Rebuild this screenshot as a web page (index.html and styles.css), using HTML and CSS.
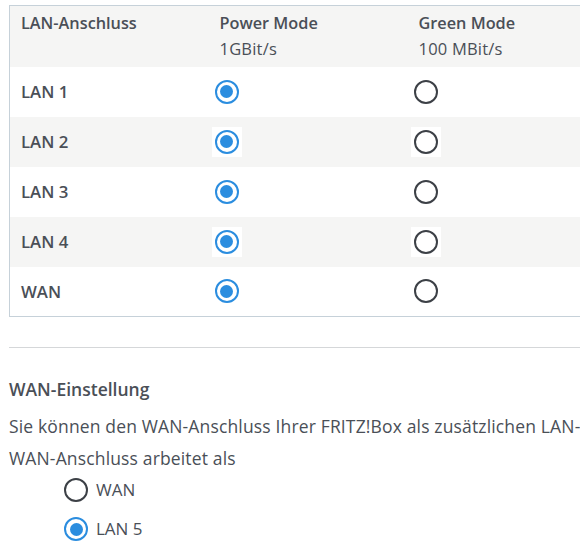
FILE: index.html
```html
<!DOCTYPE html>
<html lang="de">
<head>
<meta charset="utf-8">
<title>LAN-Einstellungen</title>
<link rel="stylesheet" href="styles.css">
</head>
<body>
<div class="page">
  <table class="ports">
    <thead>
      <tr>
        <th>LAN-Anschluss</th>
        <th>Power Mode<span class="sub">1GBit/s</span></th>
        <th>Green Mode<span class="sub">100 MBit/s</span></th>
      </tr>
    </thead>
    <tbody>
      <tr><td class="name">LAN 1</td><td><span class="rbox"><span class="radio on"></span></span></td><td><span class="rbox"><span class="radio"></span></span></td></tr>
      <tr><td class="name">LAN 2</td><td><span class="rbox"><span class="radio on"></span></span></td><td><span class="rbox"><span class="radio"></span></span></td></tr>
      <tr><td class="name">LAN 3</td><td><span class="rbox"><span class="radio on"></span></span></td><td><span class="rbox"><span class="radio"></span></span></td></tr>
      <tr><td class="name">LAN 4</td><td><span class="rbox"><span class="radio on"></span></span></td><td><span class="rbox"><span class="radio"></span></span></td></tr>
      <tr><td class="name">WAN</td><td><span class="rbox"><span class="radio on"></span></span></td><td><span class="rbox"><span class="radio"></span></span></td></tr>
    </tbody>
  </table>

  <hr class="sep">

  <h2 class="title">WAN-Einstellung</h2>
  <p class="text">Sie können den WAN-Anschluss Ihrer FRITZ!Box als zusätzlichen LAN-</p>
  <p class="text">WAN-Anschluss arbeitet als</p>
  <div class="options">
    <label class="opt"><span class="radio"></span>WAN</label>
    <label class="opt"><span class="radio on"></span>LAN 5</label>
  </div>
</div>
</body>
</html>
```

FILE: styles.css
```css
html, body {
  margin: 0;
  padding: 0;
  background: #ffffff;
  overflow: hidden;
}

body {
  font-family: "Open Sans", "Noto Sans", sans-serif;
  color: #4a4f57;
  font-size: 16px;
}

.page {
  padding: 5px 0 0 9px;
  width: 640px;
}

.ports {
  border-collapse: collapse;
  border: 1px solid #c6d1d9;
  width: 620px;
  table-layout: fixed;
}

.ports th,
.ports td {
  width: 199px;
  text-align: left;
  padding: 0 0 0 11px;
  box-sizing: border-box;
}

.ports th:last-child,
.ports td:last-child {
  width: auto;
}

.ports thead tr {
  background: #f5f5f4;
  height: 61px;
}

.ports th {
  vertical-align: top;
  padding-top: 6px;
  font-weight: 600;
  font-size: 16.3px;
  line-height: 22px;
}

.ports .sub {
  display: block;
  font-weight: 400;
  font-size: 16.5px;
  letter-spacing: 0.2px;
  line-height: 29px;
}

.ports tbody tr {
  height: 50px;
}

.ports tbody tr:nth-child(even) {
  background: #f5f5f4;
}

.ports td {
  vertical-align: middle;
  font-size: 16.8px;
}

.ports .name {
  font-weight: 600;
}

.rbox {
  display: flex;
  align-items: center;
  justify-content: center;
  width: 30px;
  height: 30px;
  margin-left: -8px;
  background: #ffffff;
}

.radio {
  display: inline-flex;
  align-items: center;
  justify-content: center;
  width: 24px;
  height: 24px;
  box-sizing: border-box;
  border: 2.5px solid #3c4046;
  border-radius: 50%;
  flex: none;
}

.radio.on {
  border-color: #2b8ddf;
}

.radio.on::after {
  content: "";
  width: 13px;
  height: 13px;
  border-radius: 50%;
  background: #2b8ddf;
}

.sep {
  border: 0;
  border-top: 1px solid #d5d7d9;
  margin: 30px 0 0 0;
  width: 620px;
}

.title {
  font-size: 17.5px;
  font-weight: 600;
  margin: 29px 0 0 0;
  line-height: 24px;
}

.text {
  margin: 13px 0 0 0;
  font-size: 17.5px;
  letter-spacing: 0.15px;
  line-height: 24px;
  white-space: nowrap;
}

.text + .text {
  margin-top: 8px;
}

.options {
  display: flex;
  flex-direction: column;
  gap: 15px;
  margin: 8px 0 0 55px;
}

.opt {
  display: flex;
  align-items: center;
  gap: 8px;
  font-size: 17px;
  line-height: 24px;
}
```
